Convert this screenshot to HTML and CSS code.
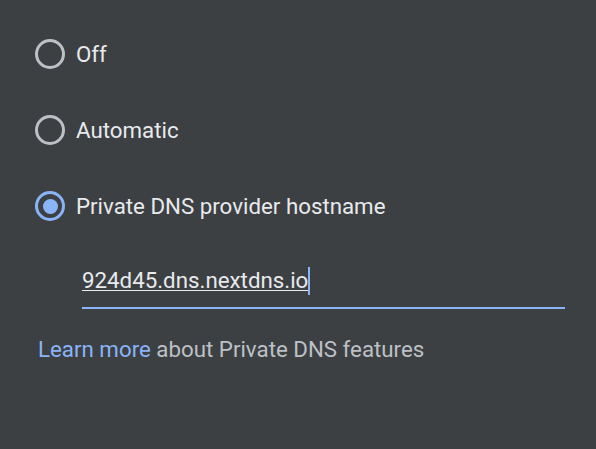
FILE: index.html
```html
<!DOCTYPE html>
<html lang="en">
<head>
<meta charset="utf-8">
<title>Private DNS</title>
<link rel="stylesheet" href="styles.css">
</head>
<body>
<div class="dialog">
  <div class="options">
    <div class="option">
      <span class="radio"></span>
      <span class="label">Off</span>
    </div>
    <div class="option">
      <span class="radio"></span>
      <span class="label">Automatic</span>
    </div>
    <div class="option">
      <span class="radio checked"></span>
      <span class="label">Private DNS provider hostname</span>
    </div>
  </div>
  <div class="field">
    <span class="value">924d45.dns.nextdns.io</span><span class="caret"></span>
  </div>
  <p class="help"><span class="link">Learn more</span> about Private DNS features</p>
</div>
</body>
</html>
```
FILE: styles.css
```css
html, body {
  margin: 0;
  padding: 0;
  background: #3c4043;
}
body {
  font-family: Roboto, "Noto Sans", sans-serif;
  font-size: 22.3px;
  color: #e8eaed;
}
.dialog {
  padding-top: 16px;
  height: 433px;
}
.options {
  display: flex;
  flex-direction: column;
}
.option {
  display: flex;
  align-items: center;
  height: 76px;
  padding-left: 35px;
  gap: 11px;
}
.radio {
  box-sizing: border-box;
  width: 30px;
  height: 30px;
  border: 3px solid #bdc1c6;
  border-radius: 50%;
  display: flex;
  align-items: center;
  justify-content: center;
  flex: none;
}
.radio.checked {
  border-color: #8ab4f8;
}
.radio.checked::after {
  content: "";
  width: 15px;
  height: 15px;
  border-radius: 50%;
  background: #8ab4f8;
}
.label {
  line-height: 26px;
}
.field {
  margin: 23px 0 0 82px;
  width: 483px;
  line-height: 26px;
  padding-bottom: 12px;
  border-bottom: 2px solid #8ab4f8;
}
.value {
  text-decoration: underline;
  text-decoration-thickness: 1px;
  text-underline-offset: 2px;
}
.caret {
  display: inline-block;
  width: 2px;
  height: 28px;
  background: #8ab4f8;
  vertical-align: -7px;
}
.help {
  margin: 27px 0 0 38px;
  line-height: 26px;
  color: #bdc1c6;
}
.link {
  color: #8ab4f8;
}
```
